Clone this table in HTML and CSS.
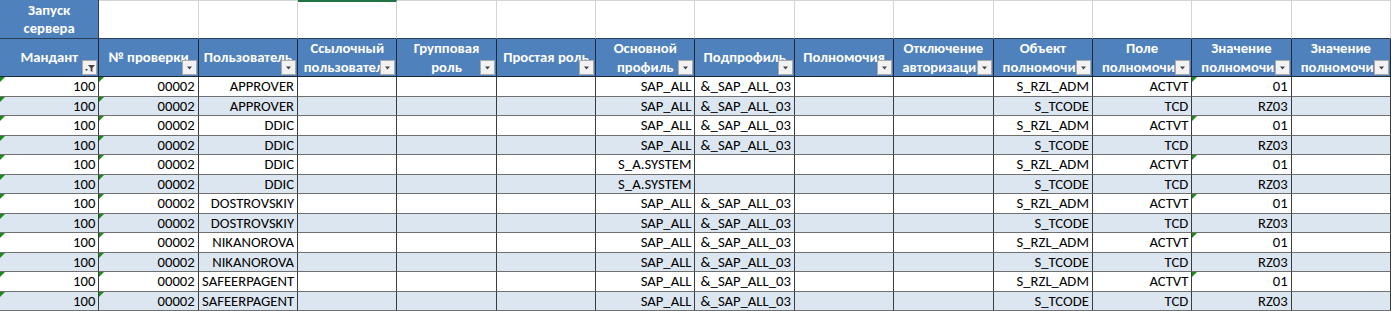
FILE: index.html
```html
<!DOCTYPE html>
<html lang="ru">
<head>
<meta charset="utf-8">
<title>Запуск сервера</title>
<link rel="stylesheet" href="styles.css">
</head>
<body>
<div class="sheet">
  <!-- top row -->
  <div class="launch">Запуск<br>сервера</div>
  <div class="blank"></div>
  <div class="blank"></div>
  <div class="blank sel"></div>
  <div class="blank"></div>
  <div class="blank"></div>
  <div class="blank"></div>
  <div class="blank"></div>
  <div class="blank"></div>
  <div class="blank"></div>
  <div class="blank"></div>
  <div class="blank"></div>
  <div class="blank"></div>
  <div class="blank"></div>

  <!-- header row -->
  <div class="h"><span class="ht">Мандант</span><span class="fb on"><svg width="13" height="13" viewBox="0 0 13 13"><path d="M2 8h3l-1.5 2z" fill="#444"/><path d="M5 4h7l-2.6 3v4l-1.8-1V7z" fill="#444"/></svg></span></div>
  <div class="h"><span class="ht">№ проверки</span><span class="fb"><svg width="13" height="13" viewBox="0 0 13 13"><path d="M4 5.5h5l-2.5 3z" fill="#444"/></svg></span></div>
  <div class="h"><span class="ht">Пользователь</span><span class="fb"><svg width="13" height="13" viewBox="0 0 13 13"><path d="M4 5.5h5l-2.5 3z" fill="#444"/></svg></span></div>
  <div class="h"><span class="ht">Ссылочный<br>пользователь</span><span class="fb"><svg width="13" height="13" viewBox="0 0 13 13"><path d="M4 5.5h5l-2.5 3z" fill="#444"/></svg></span></div>
  <div class="h"><span class="ht">Групповая<br>роль</span><span class="fb"><svg width="13" height="13" viewBox="0 0 13 13"><path d="M4 5.5h5l-2.5 3z" fill="#444"/></svg></span></div>
  <div class="h"><span class="ht">Простая роль</span><span class="fb"><svg width="13" height="13" viewBox="0 0 13 13"><path d="M4 5.5h5l-2.5 3z" fill="#444"/></svg></span></div>
  <div class="h"><span class="ht">Основной<br>профиль</span><span class="fb"><svg width="13" height="13" viewBox="0 0 13 13"><path d="M4 5.5h5l-2.5 3z" fill="#444"/></svg></span></div>
  <div class="h"><span class="ht">Подпрофиль</span><span class="fb"><svg width="13" height="13" viewBox="0 0 13 13"><path d="M4 5.5h5l-2.5 3z" fill="#444"/></svg></span></div>
  <div class="h"><span class="ht">Полномочия</span><span class="fb"><svg width="13" height="13" viewBox="0 0 13 13"><path d="M4 5.5h5l-2.5 3z" fill="#444"/></svg></span></div>
  <div class="h"><span class="ht">Отключение<br>авторизации</span><span class="fb"><svg width="13" height="13" viewBox="0 0 13 13"><path d="M4 5.5h5l-2.5 3z" fill="#444"/></svg></span></div>
  <div class="h"><span class="ht">Объект<br>полномочия</span><span class="fb"><svg width="13" height="13" viewBox="0 0 13 13"><path d="M4 5.5h5l-2.5 3z" fill="#444"/></svg></span></div>
  <div class="h"><span class="ht">Поле<br>полномочия</span><span class="fb"><svg width="13" height="13" viewBox="0 0 13 13"><path d="M4 5.5h5l-2.5 3z" fill="#444"/></svg></span></div>
  <div class="h"><span class="ht">Значение<br>полномочия</span><span class="fb"><svg width="13" height="13" viewBox="0 0 13 13"><path d="M4 5.5h5l-2.5 3z" fill="#444"/></svg></span></div>
  <div class="h"><span class="ht">Значение<br>полномочия</span><span class="fb"><svg width="13" height="13" viewBox="0 0 13 13"><path d="M4 5.5h5l-2.5 3z" fill="#444"/></svg></span></div>

  <!-- row 1 -->
  <div class="c t">100</div><div class="c t">00002</div><div class="c">APPROVER</div><div class="c"></div><div class="c"></div><div class="c"></div><div class="c">SAP_ALL</div><div class="c">&amp;_SAP_ALL_03</div><div class="c"></div><div class="c"></div><div class="c">S_RZL_ADM</div><div class="c">ACTVT</div><div class="c t">01</div><div class="c"></div>
  <!-- row 2 -->
  <div class="c a t">100</div><div class="c a t">00002</div><div class="c a">APPROVER</div><div class="c a"></div><div class="c a"></div><div class="c a"></div><div class="c a">SAP_ALL</div><div class="c a">&amp;_SAP_ALL_03</div><div class="c a"></div><div class="c a"></div><div class="c a">S_TCODE</div><div class="c a">TCD</div><div class="c a">RZ03</div><div class="c a"></div>
  <!-- row 3 -->
  <div class="c t">100</div><div class="c t">00002</div><div class="c">DDIC</div><div class="c"></div><div class="c"></div><div class="c"></div><div class="c">SAP_ALL</div><div class="c">&amp;_SAP_ALL_03</div><div class="c"></div><div class="c"></div><div class="c">S_RZL_ADM</div><div class="c">ACTVT</div><div class="c t">01</div><div class="c"></div>
  <!-- row 4 -->
  <div class="c a t">100</div><div class="c a t">00002</div><div class="c a">DDIC</div><div class="c a"></div><div class="c a"></div><div class="c a"></div><div class="c a">SAP_ALL</div><div class="c a">&amp;_SAP_ALL_03</div><div class="c a"></div><div class="c a"></div><div class="c a">S_TCODE</div><div class="c a">TCD</div><div class="c a">RZ03</div><div class="c a"></div>
  <!-- row 5 -->
  <div class="c t">100</div><div class="c t">00002</div><div class="c">DDIC</div><div class="c"></div><div class="c"></div><div class="c"></div><div class="c">S_A.SYSTEM</div><div class="c"></div><div class="c"></div><div class="c"></div><div class="c">S_RZL_ADM</div><div class="c">ACTVT</div><div class="c t">01</div><div class="c"></div>
  <!-- row 6 -->
  <div class="c a t">100</div><div class="c a t">00002</div><div class="c a">DDIC</div><div class="c a"></div><div class="c a"></div><div class="c a"></div><div class="c a">S_A.SYSTEM</div><div class="c a"></div><div class="c a"></div><div class="c a"></div><div class="c a">S_TCODE</div><div class="c a">TCD</div><div class="c a">RZ03</div><div class="c a"></div>
  <!-- row 7 -->
  <div class="c t">100</div><div class="c t">00002</div><div class="c">DOSTROVSKIY</div><div class="c"></div><div class="c"></div><div class="c"></div><div class="c">SAP_ALL</div><div class="c">&amp;_SAP_ALL_03</div><div class="c"></div><div class="c"></div><div class="c">S_RZL_ADM</div><div class="c">ACTVT</div><div class="c t">01</div><div class="c"></div>
  <!-- row 8 -->
  <div class="c a t">100</div><div class="c a t">00002</div><div class="c a">DOSTROVSKIY</div><div class="c a"></div><div class="c a"></div><div class="c a"></div><div class="c a">SAP_ALL</div><div class="c a">&amp;_SAP_ALL_03</div><div class="c a"></div><div class="c a"></div><div class="c a">S_TCODE</div><div class="c a">TCD</div><div class="c a">RZ03</div><div class="c a"></div>
  <!-- row 9 -->
  <div class="c t">100</div><div class="c t">00002</div><div class="c">NIKANOROVA</div><div class="c"></div><div class="c"></div><div class="c"></div><div class="c">SAP_ALL</div><div class="c">&amp;_SAP_ALL_03</div><div class="c"></div><div class="c"></div><div class="c">S_RZL_ADM</div><div class="c">ACTVT</div><div class="c t">01</div><div class="c"></div>
  <!-- row 10 -->
  <div class="c a t">100</div><div class="c a t">00002</div><div class="c a">NIKANOROVA</div><div class="c a"></div><div class="c a"></div><div class="c a"></div><div class="c a">SAP_ALL</div><div class="c a">&amp;_SAP_ALL_03</div><div class="c a"></div><div class="c a"></div><div class="c a">S_TCODE</div><div class="c a">TCD</div><div class="c a">RZ03</div><div class="c a"></div>
  <!-- row 11 -->
  <div class="c t">100</div><div class="c t">00002</div><div class="c">SAFEERPAGENT</div><div class="c"></div><div class="c"></div><div class="c"></div><div class="c">SAP_ALL</div><div class="c">&amp;_SAP_ALL_03</div><div class="c"></div><div class="c"></div><div class="c">S_RZL_ADM</div><div class="c">ACTVT</div><div class="c t">01</div><div class="c"></div>
  <!-- row 12 -->
  <div class="c a t">100</div><div class="c a t">00002</div><div class="c a">SAFEERPAGENT</div><div class="c a"></div><div class="c a"></div><div class="c a"></div><div class="c a">SAP_ALL</div><div class="c a">&amp;_SAP_ALL_03</div><div class="c a"></div><div class="c a"></div><div class="c a">S_TCODE</div><div class="c a">TCD</div><div class="c a">RZ03</div><div class="c a"></div>
  <!-- row 13 (cut) -->
  <div class="c t"></div><div class="c t"></div><div class="c"></div><div class="c"></div><div class="c"></div><div class="c"></div><div class="c"></div><div class="c"></div><div class="c"></div><div class="c"></div><div class="c"></div><div class="c"></div><div class="c t"></div><div class="c"></div>
</div>
</body>
</html>
```
FILE: styles.css
```css
html, body {
  margin: 0;
  padding: 0;
  background: #ffffff;
  overflow: hidden;
}

.sheet {
  width: 1391px;
  display: grid;
  grid-template-columns: repeat(14, 1fr);
  grid-template-rows: 39px 38px repeat(13, 19.5px);
  font-family: Carlito, Roboto, "Noto Sans", sans-serif;
  font-size: 14.67px;
  color: #000;
}

.launch {
  background: #4f81bd;
  color: #fff;
  font-weight: bold;
  text-align: center;
  line-height: 18px;
  padding-top: 1px;
  border-right: 1px solid #2b3d55;
  border-bottom: 1px solid #2b3d55;
  box-sizing: border-box;
}

.blank {
  border-top: 1px solid #d4d4d4;
  border-right: 1px solid #d4d4d4;
  border-bottom: 1px solid #2b3d55;
  box-sizing: border-box;
}

.blank.sel {
  border-top: 2px solid #217346;
}

.h {
  position: relative;
  background: #4f81bd;
  color: #fff;
  font-weight: bold;
  border-right: 1px solid #1e2a3a;
  border-bottom: 1px solid #1e2a3a;
  box-sizing: border-box;
  display: flex;
  align-items: center;
  justify-content: center;
  overflow: hidden;
}

.ht {
  display: block;
  width: 100%;
  text-align: center;
  white-space: nowrap;
  line-height: 19px;
  padding: 0 2px;
  box-sizing: border-box;
}

.fb {
  position: absolute;
  right: 1px;
  bottom: 1px;
  width: 15px;
  height: 15px;
  box-sizing: border-box;
  background: #f2f2f2;
  border: 1px solid #a9a9a9;
  display: flex;
  align-items: center;
  justify-content: center;
}

.c {
  position: relative;
  border-right: 1px solid #3c3c3c;
  border-bottom: 1px solid #707070;
  box-sizing: border-box;
  text-align: right;
  padding-right: 3px;
  line-height: 19px;
  white-space: nowrap;
  overflow: hidden;
  background: #ffffff;
}

.c.a {
  background: #dce6f1;
}

.c.t::before {
  content: "";
  position: absolute;
  left: 0;
  top: 0;
  width: 0;
  height: 0;
  border-top: 5px solid #1a8a1a;
  border-right: 5px solid transparent;
}
```
